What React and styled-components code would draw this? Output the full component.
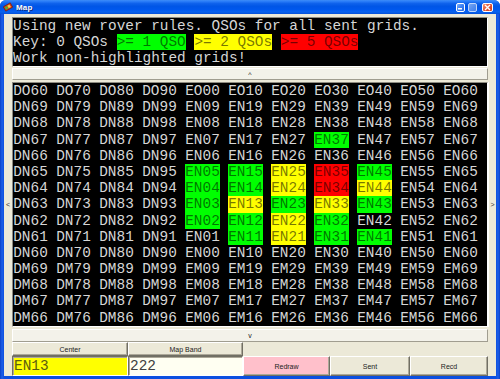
import React from 'react';
import styled, { createGlobalStyle } from 'styled-components';

const GlobalStyle = createGlobalStyle`
  html, body {
    margin: 0;
    padding: 0;
    width: 500px;
    height: 379px;
    overflow: hidden;
    background: #ffffff;
  }
  #root {
    width: 500px;
    height: 379px;
  }
`;

const HIGHLIGHT = {
  green: '#00ff00',
  yellow: '#ffff00',
  red: '#ff0000',
};

const Window = styled.div`
  width: 500px;
  height: 379px;
  box-sizing: border-box;
  display: flex;
  flex-direction: column;
  background: linear-gradient(to right, #0a3fc8 0px, #1c5fe8 2px, #0c4fe0 4px, #0c4fe0 496px, #1c5fe8 498px, #0a3fc8 500px);
  border-radius: 6px 6px 0 0;
  overflow: hidden;
`;

const TitleBar = styled.div`
  height: 14px;
  flex: none;
  display: flex;
  align-items: center;
  padding: 0 7px 0 3px;
  gap: 3px;
  background: linear-gradient(
    to bottom,
    #3d8cf7 0%,
    #2a7cf8 10%,
    #0f62ec 25%,
    #0055e6 45%,
    #0058ee 70%,
    #0762ef 85%,
    #0450d8 100%
  );
`;

const TitleText = styled.span`
  flex: 1;
  font-family: 'Liberation Sans', Arial, sans-serif;
  font-size: 8px;
  font-weight: bold;
  color: #ffffff;
  text-shadow: 1px 1px 0 #0a2a80;
  letter-spacing: 0.2px;
`;

const CaptionButton = styled.div`
  height: 9px;
  box-sizing: border-box;
  border: 1px solid #ffffff;
  border-radius: 2px;
  display: flex;
  align-items: ${(p) => (p.kind === 'close' ? 'center' : 'flex-end')};
  justify-content: center;
  background: ${(p) =>
    p.kind === 'close'
      ? 'linear-gradient(135deg, #f29a7a 0%, #e4583a 45%, #d23a18 100%)'
      : p.kind === 'disabled'
      ? 'linear-gradient(135deg, #9ec0f6 0%, #6e9ff0 60%, #5a8eea 100%)'
      : 'linear-gradient(135deg, #7fb0fa 0%, #3c80f4 50%, #2465e0 100%)'};
  opacity: ${(p) => (p.kind === 'disabled' ? 0.75 : 1)};
  margin-left: ${(p) => (p.kind === 'close' ? '2px' : '0')};
  width: ${(p) => (p.kind === 'close' ? '11px' : '9px')};
`;

const Client = styled.div`
  flex: 1;
  margin: 0 4px 3px 4px;
  background: #ece9d8;
  display: flex;
  flex-direction: column;
  padding-top: 3px;
`;

const Mono = styled.div`
  font-family: 'Liberation Mono', 'Courier New', monospace;
  font-size: 14.4px;
  color: #d6d6d6;
  white-space: pre;
`;

const InfoPanel = styled(Mono)`
  margin: 0 8px;
  height: 50px;
  box-sizing: border-box;
  background: #000000;
  border: 1px solid;
  border-color: #8d8b80 #ffffff #ffffff #8d8b80;
`;

const InfoLine = styled.div`
  height: 16px;
  line-height: 16px;
`;

const Swatch = styled.span`
  display: inline-block;
  height: 16px;
  line-height: 16px;
  vertical-align: top;
  background: ${(p) => HIGHLIGHT[p.color]};
  color: rgba(0, 0, 0, 0.55);
`;

const ScrollBar = styled.div`
  margin: ${(p) => p.margin};
  height: ${(p) => p.height}px;
  box-sizing: border-box;
  background: #f3f2ea;
  border: 1px solid;
  border-color: #ffffff #a09d90 #a09d90 #ffffff;
  display: flex;
  align-items: center;
  justify-content: center;
  font-family: 'Liberation Sans', Arial, sans-serif;
  font-size: 7px;
  color: #222;
  line-height: 1;
`;

const MiddleRow = styled.div`
  display: flex;
  margin-top: 2px;
  height: 245px;
`;

const SideButton = styled.div`
  width: 8px;
  flex: none;
  display: flex;
  align-items: center;
  justify-content: center;
  font-family: 'Liberation Sans', Arial, sans-serif;
  font-size: 7px;
  color: #333;
  background: #ece9d8;
  box-sizing: border-box;
  border-left: ${(p) => (p.side === 'right' ? '1px solid #ffffff' : 'none')};
`;

const GridPanel = styled(Mono)`
  flex: 1;
  box-sizing: border-box;
  background: #000000;
  border: 1px solid;
  border-color: #8d8b80 #ffffff #ffffff #8d8b80;
  display: grid;
  grid-template-columns: repeat(11, 43px);
  grid-auto-rows: 16.2px;
  align-content: start;
`;

const Cell = styled.span`
  width: 35px;
  line-height: 16.2px;
  text-align: center;
  background: ${(p) => (p.hl ? HIGHLIGHT[p.hl] : 'transparent')};
  color: ${(p) => (p.hl ? 'rgba(0, 0, 0, 0.55)' : '#d6d6d6')};
`;

const Controls = styled.div`
  margin: 0 8px;
  display: grid;
  grid-template-columns: 116px 115px 87px 80px 78px;
  grid-template-rows: 14px 20px;
`;

const Button = styled.div`
  box-sizing: border-box;
  display: flex;
  align-items: center;
  justify-content: center;
  font-family: 'Liberation Sans', Arial, sans-serif;
  font-size: 7px;
  color: #222;
  background: ${(p) => p.bg || '#ece9d8'};
  border: 1px solid;
  border-color: #ffffff #716f64 #716f64 #ffffff;
  box-shadow: inset -1px -1px 0 #aca899;
`;

const Field = styled(Mono)`
  box-sizing: border-box;
  background: ${(p) => p.bg};
  color: ${(p) => p.fg};
  border: 1px solid;
  border-color: #716f64 #ffffff #ffffff #716f64;
  box-shadow: inset 1px 1px 0 #aca899;
  line-height: 18px;
  padding-left: 1px;
`;

const highlights = {
  EN37: 'green',
  EN05: 'green', EN15: 'green', EN25: 'yellow', EN35: 'red', EN45: 'green',
  EN04: 'green', EN14: 'green', EN24: 'yellow', EN34: 'red', EN44: 'yellow',
  EN03: 'green', EN13: 'yellow', EN23: 'green', EN33: 'yellow', EN43: 'green',
  EN02: 'green', EN12: 'green', EN22: 'yellow', EN32: 'green',
  EN11: 'green', EN21: 'yellow', EN31: 'green', EN41: 'green',
};

function gridName(row, col) {
  const lonLetter = col < 4 ? 'D' : 'E';
  const lonDigit = (6 + col) % 10;
  let latLetter;
  let latDigit;
  if (row === 0) {
    latLetter = 'O';
    latDigit = 0;
  } else if (row <= 10) {
    latLetter = 'N';
    latDigit = 10 - row;
  } else {
    latLetter = 'M';
    latDigit = 20 - row;
  }
  return `${lonLetter}${latLetter}${lonDigit}${latDigit}`;
}

function AppIcon() {
  return (
    <svg width="10" height="10" viewBox="0 0 10 10">
      <g transform="rotate(-30 5 5)">
        <rect x="1" y="2.5" width="8" height="5" fill="#d8361a" stroke="#6a1a08" strokeWidth="0.6" />
        <rect x="2" y="3.5" width="2.5" height="3" fill="#5ab030" />
        <rect x="5" y="3.5" width="2.5" height="3" fill="#f0d040" />
      </g>
    </svg>
  );
}

export default function App() {
  const cells = [];
  for (let r = 0; r < 15; r++) {
    for (let c = 0; c < 11; c++) {
      const name = gridName(r, c);
      cells.push(
        <Cell key={name} hl={highlights[name]}>
          {name}
        </Cell>
      );
    }
  }

  return (
    <>
      <GlobalStyle />
      <Window>
        <TitleBar>
          <AppIcon />
          <TitleText>Map</TitleText>
          <CaptionButton kind="min">
            <svg width="5" height="4" viewBox="0 0 5 4">
              <rect x="0" y="1" width="4" height="1.5" fill="#fff" />
            </svg>
          </CaptionButton>
          <CaptionButton kind="disabled" />
          <CaptionButton kind="close">
            <svg width="7" height="7" viewBox="0 0 7 7">
              <path d="M1 1 L6 6 M6 1 L1 6" stroke="#fff" strokeWidth="1.4" />
            </svg>
          </CaptionButton>
        </TitleBar>
        <Client>
          <InfoPanel>
            <InfoLine>Using new rover rules. QSOs for all sent grids.</InfoLine>
            <InfoLine>
              Key: 0 QSOs <Swatch color="green">&gt;= 1 QSO</Swatch> <Swatch color="yellow">&gt;= 2 QSOs</Swatch>{' '}
              <Swatch color="red">&gt;= 5 QSOs</Swatch>
            </InfoLine>
            <InfoLine>Work non-highlighted grids!</InfoLine>
          </InfoPanel>
          <ScrollBar margin="1px 8px 0 8px" height={12}>^</ScrollBar>
          <MiddleRow>
            <SideButton side="left">&lt;</SideButton>
            <GridPanel>{cells}</GridPanel>
            <SideButton side="right">&gt;</SideButton>
          </MiddleRow>
          <ScrollBar margin="2px 8px 0 8px" height={13}>v</ScrollBar>
          <Controls>
            <Button>Center</Button>
            <Button>Map Band</Button>
            <span />
            <span />
            <span />
            <Field bg="#ffff00" fg="#5c5c10">EN13</Field>
            <Field bg="#fffff2" fg="#404040">222</Field>
            <Button bg="#ffc0cb">Redraw</Button>
            <Button>Sent</Button>
            <Button>Recd</Button>
          </Controls>
        </Client>
      </Window>
    </>
  );
}
